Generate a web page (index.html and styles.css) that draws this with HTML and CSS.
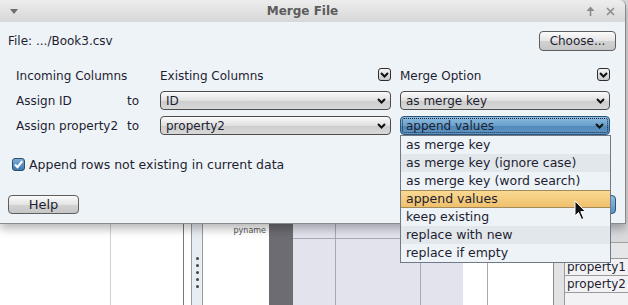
FILE: index.html
```html
<!DOCTYPE html>
<html lang="en">
<head>
  <meta charset="UTF-8" />
  <title>Merge File</title>
  <link rel="stylesheet" href="styles.css">
</head>
<body>
<div class="desk">

  <!-- application behind the dialog -->
  <div class="app">
    <div class="col c1"></div>
    <div class="col c2"></div>
    <div class="col c3"></div>
    <div class="col split">
      <span class="dot"></span><span class="dot"></span><span class="dot"></span><span class="dot"></span><span class="dot"></span>
    </div>
    <div class="col c4"><span class="pyname">pyname</span></div>
    <div class="col dark"></div>
    <div class="col lav">
      <div class="lav-cell w42"></div>
      <div class="lav-cell w85"></div>
      <div class="lav-cell w43"></div>
    </div>
    <div class="col plain">
      <div class="plain-cell w24"></div>
      <div class="plain-cell w66"></div>
    </div>
    <div class="col rule"></div>
    <div class="col grey"></div>
    <div class="col table">
      <div class="t-head"></div>
      <div class="t-sub"></div>
      <div class="t-cell">property1</div>
      <div class="t-cell">property2</div>
      <div class="t-cell"></div>
    </div>
  </div>

  <!-- dialog window -->
  <div class="dialog">
    <div class="titlebar">
      <div class="tb-left">
        <svg width="8" height="5" viewBox="0 0 8 5"><path d="M0 0 L8 0 L4 5 Z" fill="#6e6e6e"/></svg>
      </div>
      <div class="tb-title">Merge File</div>
      <div class="tb-right">
        <svg width="9" height="10" viewBox="0 0 9 10"><path d="M4.5 2 L4.5 10" stroke="#8c8c8c" stroke-width="1.6"/><path d="M0.5 5 L4.5 0.5 L8.5 5 Z" fill="#8c8c8c"/></svg>
        <svg width="9" height="9" viewBox="0 0 9 9"><path d="M1 1 L8 8 M8 1 L1 8" fill="none" stroke="#8c8c8c" stroke-width="1.6"/></svg>
      </div>
    </div>

    <div class="body">
      <div class="file-row">
        <span>File: .../Book3.csv</span>
        <button class="btn choose">Choose...</button>
      </div>

      <div class="map">
        <div class="head span2">Incoming Columns</div>
        <div class="head split-head">Existing Columns
          <span class="menu-box"><svg width="9" height="6" viewBox="0 0 9 6"><path d="M1 1 L4.5 4.5 L8 1" fill="none" stroke="#111" stroke-width="2"/></svg></span>
        </div>
        <div class="head split-head">Merge Option
          <span class="menu-box"><svg width="9" height="6" viewBox="0 0 9 6"><path d="M1 1 L4.5 4.5 L8 1" fill="none" stroke="#111" stroke-width="2"/></svg></span>
        </div>

        <div class="cell">Assign ID</div>
        <div class="cell">to</div>
        <div class="select wide">ID
          <svg width="9" height="6" viewBox="0 0 9 6"><path d="M1 1 L4.5 4.5 L8 1" fill="none" stroke="#111" stroke-width="2"/></svg>
        </div>
        <div class="select">as merge key
          <svg width="9" height="6" viewBox="0 0 9 6"><path d="M1 1 L4.5 4.5 L8 1" fill="none" stroke="#111" stroke-width="2"/></svg>
        </div>

        <div class="cell">Assign property2</div>
        <div class="cell">to</div>
        <div class="select wide">property2
          <svg width="9" height="6" viewBox="0 0 9 6"><path d="M1 1 L4.5 4.5 L8 1" fill="none" stroke="#111" stroke-width="2"/></svg>
        </div>
        <div class="select focused">
          <div class="focus-ring">append values
            <svg width="9" height="6" viewBox="0 0 9 6"><path d="M1 1 L4.5 4.5 L8 1" fill="none" stroke="#111" stroke-width="2"/></svg>
          </div>
        </div>
      </div>

      <div class="append">
        <span class="check"><svg width="11" height="11" viewBox="0 0 11 11"><path d="M2 5.5 L4.5 8.2 L9.2 2.2" fill="none" stroke="#fff" stroke-width="2"/></svg></span>
        Append rows not existing in current data
      </div>

      <div class="actions">
        <button class="btn help">Help</button>
        <button class="btn ok">OK</button>
      </div>
    </div>

    <ul class="popup">
      <li>as merge key</li>
      <li>as merge key (ignore case)</li>
      <li>as merge key (word search)</li>
      <li class="hover">append values</li>
      <li>keep existing</li>
      <li>replace with new</li>
      <li>replace if empty</li>
    </ul>

    <svg class="cursor" width="13" height="21" viewBox="0 0 13 21"><path d="M1 1 L1 16 L4.5 12.5 L7.5 19.5 L9.8 18.5 L6.8 11.6 L11.5 11.6 Z" fill="#111" stroke="#fff" stroke-width="1"/></svg>
  </div>

</div>
</body>
</html>
```

FILE: styles.css
```css
* {
  box-sizing: border-box;
  margin: 0;
  padding: 0;
}

body {
  font-family: 'DejaVu Sans', sans-serif;
  font-size: 12px;
  color: #1e1e30;
  background: #fff;
}

.desk {
  position: relative;
  width: 628px;
  height: 305px;
  overflow: hidden;
}

/* ---------- background application ---------- */

.app {
  display: flex;
  height: 305px;
}

.col {
  height: 100%;
  flex-shrink: 0;
}

.c1 { width: 111px; border-right: 1px solid #d2d2d2; }
.c2 { width: 73px; border-right: 1px solid #777; }
.c3 { width: 7px; }

.split {
  width: 12px;
  background: #e8edf3;
  border-left: 1px solid #9a9a9a;
  border-right: 1px solid #9a9a9a;
  display: flex;
  flex-direction: column;
  align-items: center;
  gap: 4px;
  padding-top: 257px;
}

.dot {
  width: 3px;
  height: 3px;
  border-radius: 50%;
  background: #444;
}

.c4 {
  width: 66px;
  text-align: right;
  padding: 222px 3px 0 0;
}

.pyname {
  font-size: 8px;
  color: #555;
}

.dark {
  width: 24px;
  background: #6c6c72;
}

.lav {
  width: 170px;
  display: flex;
  background: #e3e3ed;
}

.lav-cell,
.plain-cell {
  height: 239px;
  border-bottom: 1px solid #a8a8b0;
}

.lav-cell + .lav-cell,
.plain-cell + .plain-cell {
  border-left: 1px solid #a8a8b0;
  height: 100%;
  background: linear-gradient(#0000 238px, #a8a8b0 238px, #a8a8b0 239px, #0000 239px);
  border-bottom: none;
}

.w42 { width: 42px; }
.w85 { width: 85px; }
.w43 { width: 43px; }
.w24 { width: 24px; }
.w66 { width: 66px; }

.plain {
  width: 90px;
  display: flex;
  background: #fff;
}

.rule {
  width: 1px;
  background: #8a8a8a;
}

.grey {
  width: 10px;
  background: #e2e2e4;
}

.table {
  width: 64px;
  background: #f2f2f5;
}

.t-head {
  height: 243px;
  background: #d9d9dc;
  border-bottom: 1px solid #a0a0a0;
}

.t-sub {
  height: 15px;
  background: #e6e6e8;
}

.t-cell {
  height: 17px;
  line-height: 16px;
  padding-left: 2px;
  border-top: 1px solid #9a9a9a;
  border-left: 1px solid #9a9a9a;
  color: #1e1e30;
}

/* ---------- dialog ---------- */

.dialog {
  position: absolute;
  left: 0;
  top: 0;
  width: 626px;
  height: 224px;
  background: #eef3f8;
  border-right: 1px solid #8a8a8a;
  border-bottom: 1px solid #8a8a8a;
  border-top-right-radius: 6px;
  box-shadow: 0 5px 10px rgba(0, 0, 0, 0.28);
}

.titlebar {
  height: 22px;
  display: flex;
  align-items: center;
  background: linear-gradient(#ededed, #d7d7d7);
  border-top-right-radius: 6px;
}

.tb-left {
  width: 28px;
  padding-left: 10px;
  display: flex;
}

.tb-title {
  flex: 1;
  text-align: center;
  font-weight: bold;
  color: #5c5c5c;
}

.tb-right {
  width: 48px;
  display: flex;
  align-items: center;
  gap: 11px;
  padding-left: 9px;
}

.body {
  padding: 9px 9px 9px 8px;
}

.file-row {
  height: 20px;
  display: flex;
  justify-content: space-between;
  align-items: center;
}

.btn {
  font-family: inherit;
  font-size: 12px;
  color: #1e1e30;
  border: 1px solid #5e5e5e;
  border-radius: 4px;
  background: linear-gradient(#fbfbfb, #e4e4e4 50%, #d2d2d2 52%, #c6c6c6);
}

.choose {
  width: 77px;
  height: 20px;
}

.map {
  display: grid;
  grid-template-columns: 111px 33px 240px 210px;
  grid-template-rows: 20px 19px 19px;
  row-gap: 6px;
  padding-left: 8px;
  margin-top: 14px;
}

.head,
.cell {
  display: flex;
  align-items: center;
}

.head {
  padding-top: 2px;
}

.span2 {
  grid-column: span 2;
}

.split-head {
  justify-content: space-between;
  width: 231px;
}

.map > .head:nth-child(3) {
  width: 210px;
}

.menu-box {
  width: 13px;
  height: 13px;
  margin-top: -3px;
  border: 1px solid #2e2e2e;
  border-radius: 3px;
  background: linear-gradient(#f6f6f6, #c9c9c9);
  display: flex;
  align-items: center;
  justify-content: center;
}

.select {
  display: flex;
  align-items: center;
  justify-content: space-between;
  height: 19px;
  width: 210px;
  padding: 0 4px 0 5px;
  border: 1px solid #4c4c4c;
  border-radius: 4px;
  background: linear-gradient(#fafafa, #e0e0e0 50%, #cdcdcd 52%, #d8d8d8);
}

.select.wide {
  width: 231px;
}

.select.focused {
  border-color: #2c5578;
  background: linear-gradient(#8fbde0, #6aa0cc 50%, #5189ba 52%, #5e95c4);
  padding: 0 1px;
}

.focus-ring {
  flex: 1;
  display: flex;
  align-items: center;
  justify-content: space-between;
  height: 15px;
  padding: 0 3px 0 3px;
  border: 1px dotted #1a2a40;
  border-radius: 2px;
}

.append {
  display: flex;
  align-items: center;
  gap: 4px;
  height: 13px;
  margin-top: 23px;
  padding-left: 4px;
  font-size: 12.5px;
}

.check {
  width: 13px;
  height: 13px;
  border: 1px solid #2a4d70;
  border-radius: 3px;
  background: linear-gradient(#7badd8, #3f78ae);
  display: flex;
  align-items: center;
  justify-content: center;
}

.actions {
  display: flex;
  justify-content: space-between;
  margin-top: 24px;
}

.help {
  width: 71px;
  height: 19px;
  font-size: 13px;
}

.ok {
  width: 64px;
  height: 19px;
  border-color: #2c5578;
  background: linear-gradient(#8fbde0, #5b93c3);
}

.popup {
  position: absolute;
  left: 400px;
  top: 135px;
  width: 211px;
  list-style: none;
  border: 1px solid #6f7a86;
  background: #eef3f8;
  z-index: 2;
}

.popup li {
  height: 18px;
  line-height: 18px;
  padding-left: 5px;
  font-size: 12.5px;
}

.popup li:nth-child(even) {
  background: #e2e7ec;
}

.popup li.hover {
  background: linear-gradient(#f9d993, #f0c06c);
  border-top: 1px solid #a48c5a;
  border-bottom: 1px solid #a48c5a;
  line-height: 16px;
}

.cursor {
  position: absolute;
  left: 574px;
  top: 200px;
  z-index: 3;
}
```
